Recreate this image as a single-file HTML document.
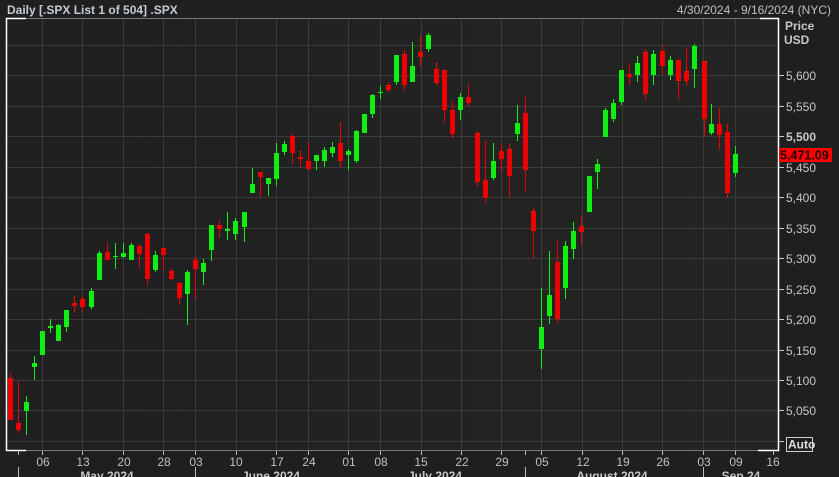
<!DOCTYPE html>
<html><head><meta charset="utf-8"><style>
html,body{margin:0;padding:0;background:#1f1f20;width:839px;height:477px;overflow:hidden}
svg{display:block}
text{font-family:"Liberation Sans",sans-serif;}
</style></head><body>
<svg width="839" height="477" viewBox="0 0 839 477" xmlns="http://www.w3.org/2000/svg">
<defs><linearGradient id="bg" x1="0" x2="1" y1="0" y2="0"><stop offset="0" stop-color="#201f21"/><stop offset="1" stop-color="#232523"/></linearGradient></defs>
<rect width="839" height="477" fill="#1f1f20"/>
<rect x="6" y="18" width="772" height="432" fill="url(#bg)"/>
<text x="7" y="14" font-size="12" font-weight="bold" fill="#c4ccd6">Daily [.SPX List 1 of 504] .SPX</text>
<text x="831" y="14" font-size="12" fill="#c0c0c0" text-anchor="end">4/30/2024 - 9/16/2024 (NYC)</text>
<path stroke="#3a3b3a" fill="none" d="M6 45.5H778M6 75.5H778M6 106.5H778M6 136.5H778M6 167.5H778M6 197.5H778M6 228.5H778M6 258.5H778M6 289.5H778M6 319.5H778M6 350.5H778M6 380.5H778M6 410.5H778M6 441.5H778M42.5 18V450M82.5 18V450M123.5 18V450M163.5 18V450M195.5 18V450M236.5 18V450M276.5 18V450M308.5 18V450M348.5 18V450M380.5 18V450M421.5 18V450M461.5 18V450M501.5 18V450M541.5 18V450M582.5 18V450M622.5 18V450M662.5 18V450M703.5 18V450M735.5 18V450"/>
<path stroke="#7a7a7a" fill="none" d="M26 18.5H760M26 450.5H758"/>
<path stroke="#fff" stroke-width="1.5" fill="none" d="M26 18.5H6.5V450.5H26M760 18.5H778.5V450.5H758"/>
<path stroke="#ee0000" fill="none" d="M10.5 373V420M18.5 382V433M74.5 295V313M82.5 296V313M107.5 243V260M139.5 244V268M147.5 233V285M163.5 248V270M171.5 269V281M179.5 282V305M195.5 257V299M219.5 220V238M260.5 172V197M292.5 133V164M300.5 150V167M308.5 142V170M340.5 122V167M388.5 82V92M404.5 50V91M420.5 35V67M436.5 62V85M444.5 70V123M452.5 101V138M468.5 84V106M477.5 131V186M485.5 141V203M501.5 144V171M509.5 143V197M525.5 96V192M533.5 207V258M557.5 239V323M581.5 215V244M629.5 63V85M645.5 49V100M662.5 44V75M678.5 59V100M686.5 47V86M704.5 61V136M719.5 108V149M727.5 123V198"/>
<path fill="#ee0000" d="M8 378h5v42h-5zM16 423h5v7h-5zM72 303h5v3h-5zM80 299h5v8h-5zM105 252h5v8h-5zM137 246h5v8h-5zM145 234h5v45h-5zM161 248h5v7h-5zM169 271h5v8h-5zM177 283h5v15h-5zM193 260h5v9h-5zM217 225h5v4h-5zM258 172h5v5h-5zM290 136h5v17h-5zM298 157h5v2h-5zM306 161h5v8h-5zM338 143h5v18h-5zM386 85h5v5h-5zM402 54h5v31h-5zM418 52h5v5h-5zM434 69h5v14h-5zM442 70h5v40h-5zM450 110h5v24h-5zM466 97h5v6h-5zM475 133h5v49h-5zM483 180h5v18h-5zM499 151h5v8h-5zM507 149h5v27h-5zM523 113h5v57h-5zM531 211h5v20h-5zM555 262h5v57h-5zM579 226h5v6h-5zM627 74h5v3h-5zM643 52h5v42h-5zM660 51h5v15h-5zM676 60h5v21h-5zM684 71h5v10h-5zM702 61h5v58h-5zM717 124h5v11h-5zM725 132h5v61h-5z"/>
<path stroke="#11ee11" fill="none" d="M26.5 396V435M34.5 356V380M42.5 331V355M50.5 319V333M58.5 324V341M66.5 310V332M91.5 288V309M99.5 251V280M115.5 243V269M123.5 243V258M131.5 243V260M155.5 251V272M187.5 270V325M203.5 259V285M211.5 225V261M227.5 212V240M235.5 218V240M244.5 212V242M252.5 168V193M268.5 178V196M276.5 143V186M284.5 141V155M316.5 155V170M324.5 147V167M332.5 142V157M348.5 149V170M356.5 130V163M364.5 114V133M372.5 94V118M380.5 86V99M396.5 55V85M412.5 42V82M428.5 33V52M460.5 93V120M493.5 143V180M517.5 105V141M541.5 288V369M549.5 251V324M565.5 241V299M573.5 222V259M589.5 176V212M597.5 159V189M605.5 108V137M613.5 99V122M621.5 70V105M637.5 56V82M653.5 50V85M670.5 56V80M694.5 44V88M711.5 104V135M735.5 146V177"/>
<path fill="#11ee11" d="M24 402h5v9h-5zM32 363h5v4h-5zM40 331h5v24h-5zM48 326h5v2h-5zM56 325h5v16h-5zM64 310h5v17h-5zM89 291h5v16h-5zM97 253h5v27h-5zM113 256h5v1h-5zM121 253h5v4h-5zM129 245h5v15h-5zM153 255h5v15h-5zM185 272h5v22h-5zM201 263h5v9h-5zM209 225h5v25h-5zM225 229h5v2h-5zM233 221h5v13h-5zM242 212h5v15h-5zM250 184h5v9h-5zM266 178h5v6h-5zM274 153h5v26h-5zM282 144h5v8h-5zM314 155h5v6h-5zM322 150h5v11h-5zM330 147h5v6h-5zM346 151h5v4h-5zM354 131h5v30h-5zM362 114h5v19h-5zM370 95h5v19h-5zM378 92h5v1h-5zM394 55h5v27h-5zM410 66h5v16h-5zM426 35h5v14h-5zM458 97h5v13h-5zM491 161h5v17h-5zM515 123h5v11h-5zM539 327h5v22h-5zM547 295h5v21h-5zM563 246h5v42h-5zM571 231h5v18h-5zM587 176h5v36h-5zM595 164h5v8h-5zM603 110h5v27h-5zM611 103h5v16h-5zM619 70h5v32h-5zM635 63h5v12h-5zM651 54h5v21h-5zM668 60h5v15h-5zM692 46h5v23h-5zM709 124h5v9h-5zM733 154h5v19h-5z"/>
<g font-size="12" fill="#c8c8c8">
<text x="785" y="30" font-weight="bold">Price</text>
<text x="784" y="44" font-weight="bold">USD</text>
<text x="786" y="80">5,600</text><text x="786" y="111">5,550</text><text x="786" y="141" font-weight="bold">5,500</text><text x="786" y="172">5,450</text><text x="786" y="202">5,400</text><text x="786" y="233">5,350</text><text x="786" y="263">5,300</text><text x="786" y="294">5,250</text><text x="786" y="324">5,200</text><text x="786" y="355">5,150</text><text x="786" y="385">5,100</text><text x="786" y="415">5,050</text>
</g>
<path stroke="#c8c8c8" fill="none" d="M779 75.5h5M779 106.5h5M779 136.5h5M779 167.5h5M779 197.5h5M779 228.5h5M779 258.5h5M779 289.5h5M779 319.5h5M779 350.5h5M779 380.5h5M779 410.5h5M779 441.5h5"/>
<rect x="779" y="148" width="53" height="14" fill="#ff0000"/>
<text x="780" y="159.5" font-size="12.5" font-weight="bold" fill="#200000">5,471.09</text>
<rect x="786.5" y="437.5" width="26" height="14" fill="none" stroke="#d0d0d0"/>
<text x="788" y="448.5" font-size="12" font-weight="bold" fill="#e0e0e0">Auto</text>
<path stroke="#bcbcbc" fill="none" d="M18.5 451v4M42.5 451v4M82.5 451v4M123.5 451v4M163.5 451v4M195.5 451v4M236.5 451v4M276.5 451v4M308.5 451v4M348.5 451v4M380.5 451v4M421.5 451v4M461.5 451v4M501.5 451v4M525.5 451v4M541.5 451v4M582.5 451v4M622.5 451v4M662.5 451v4M703.5 451v4M735.5 451v4M773.5 451v4M18.5 467v10M195.5 467v10M525.5 467v10M703.5 467v10"/>
<g font-size="12" fill="#c0c0c0" text-anchor="middle">
<text x="43" y="466">06</text><text x="83" y="466">13</text><text x="124" y="466">20</text><text x="164" y="466">28</text><text x="196" y="466">03</text><text x="236" y="466">10</text><text x="277" y="466">17</text><text x="309" y="466">24</text><text x="349" y="466">01</text><text x="381" y="466">08</text><text x="421" y="466">15</text><text x="462" y="466">22</text><text x="502" y="466">29</text><text x="542" y="466">05</text><text x="583" y="466">12</text><text x="623" y="466">19</text><text x="663" y="466">26</text><text x="704" y="466">03</text><text x="736" y="466">09</text><text x="773" y="466">16</text>
</g>
<g font-size="12" font-weight="bold" fill="#c8c8c8" text-anchor="middle">
<text x="107" y="480">May 2024</text><text x="271" y="480">June 2024</text><text x="435" y="480">July 2024</text><text x="612" y="480">August 2024</text><text x="741" y="480">Sep 24</text>
</g>
</svg>
</body></html>
